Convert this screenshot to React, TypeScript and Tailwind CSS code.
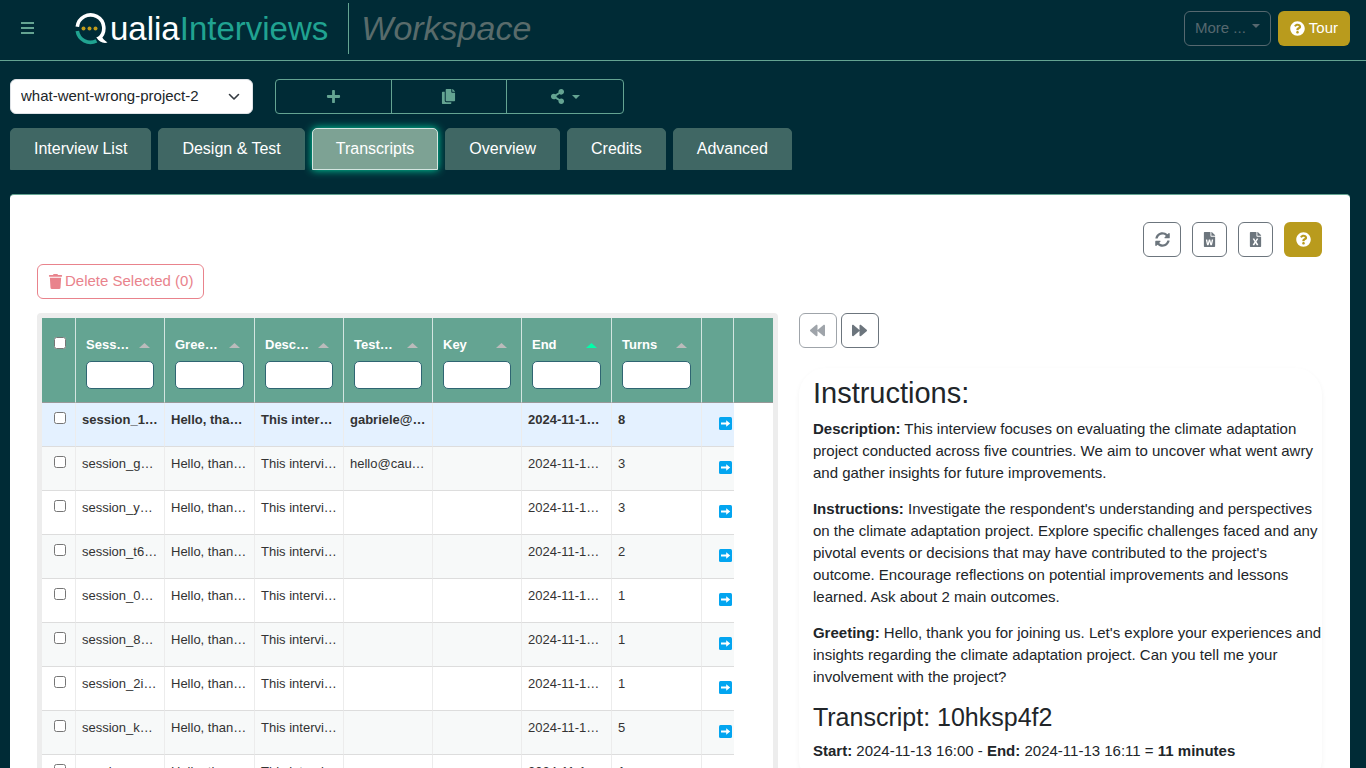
import { useState } from "react";
import {
  FaBackward,
  FaCopy,
  FaFileExcel,
  FaFileWord,
  FaForward,
  FaPlus,
  FaQuestionCircle,
  FaShareAlt,
  FaSyncAlt,
  FaTrash,
} from "react-icons/fa";

interface SessionRow {
  id: string;
  greeting: string;
  description: string;
  test: string;
  key: string;
  end: string;
  turns: number;
}

const TABS = ["Interview List", "Design & Test", "Transcripts", "Overview", "Credits", "Advanced"];

const COLUMNS = [
  { label: "Sess…", name: "Session", width: "w-[89px]" },
  { label: "Gree…", name: "Greeting", width: "w-[90px]" },
  { label: "Desc…", name: "Description", width: "w-[89px]" },
  { label: "Test…", name: "Tester", width: "w-[89px]" },
  { label: "Key", name: "Key", width: "w-[89px]" },
  { label: "End", name: "End", width: "w-[90px]" },
  { label: "Turns", name: "Turns", width: "w-[90px]" },
];

const makeRow = (id: string, turns: number, test = ""): SessionRow => ({
  id,
  greeting: "Hello, than…",
  description: "This intervi…",
  test,
  key: "",
  end: "2024-11-1…",
  turns,
});

const ROWS: SessionRow[] = [
  { ...makeRow("session_1…", 8, "gabriele@…"), greeting: "Hello, tha…", description: "This inter…" },
  makeRow("session_g…", 3, "hello@cau…"),
  makeRow("session_y…", 3),
  makeRow("session_t6…", 2),
  makeRow("session_0…", 1),
  makeRow("session_8…", 1),
  makeRow("session_2i…", 1),
  makeRow("session_k…", 5),
  makeRow("session_u…", 1),
];

function Logo() {
  return (
    <a href="#home" aria-label="Qualia Interviews" className="flex items-center text-[33px] leading-[38px]">
      <svg width="35" height="32" viewBox="0 0 35 32" fill="none" aria-hidden="true">
        <path d="M2.3 13.800A13.300 13.300 0 1 1 24.200 25.300" stroke="#fff" strokeWidth="3.6" />
        <path d="M21.300 24.200L26.300 22.800C27.500 25.500 29 27.200 32.500 29.600C28 30.600 24 29 21.300 24.200Z" fill="#fff" />
        <path d="M2.300 18A13.300 13.300 0 0 0 21.500 27.800" stroke="#20a391" strokeWidth="3.600" />
        <circle cx="8.500" cy="15.500" r="2" fill="#c09c1c" />
        <circle cx="14.500" cy="15.500" r="2" fill="#c09c1c" />
        <circle cx="20.500" cy="15.500" r="2" fill="#c09c1c" />
      </svg>
      <span className="text-white">ualia</span>
      <span className="text-[#20a391]">Interviews</span>
    </a>
  );
}

function Caret() {
  return (
    <svg width="8" height="4" viewBox="0 0 8 4" fill="currentColor" aria-hidden="true">
      <path d="M0 0h8L4 4z" />
    </svg>
  );
}

function Header() {
  return (
    <header className="flex h-[61px] items-center border-b border-[#64a492] pb-1 pl-[21px] pr-4">
      <button aria-label="Menu" className="text-[#64a492]">
        <svg className="block" width="14" height="12" viewBox="0 0 14 12" fill="currentColor" aria-hidden="true">
          <path d="M0 0h13v2H0zM0 5h13v2H0zM0 10h13v2H0z" />
        </svg>
      </button>
      <div className="ml-10 flex items-center self-start pt-[3px]">
        <Logo />
        <span className="ml-5 h-[51px] border-l border-[#64a492]" />
        <h1 className="ml-3 pb-[2px] text-[34px] italic leading-[38px] text-[#596b6b]">Workspace</h1>
      </div>
      <div className="ml-auto flex gap-[7px]">
        <button className="flex h-[35px] items-center gap-1.5 rounded-md border border-[#56686f] px-[10px] text-[15px] text-[#56686f]">
          More ...
          <span className="pb-1">
            <Caret />
          </span>
        </button>
        <button className="flex h-[35px] items-center gap-1 rounded-md bg-[#b99b1d] px-3 text-[15px] text-white">
          <FaQuestionCircle size={15} />
          Tour
        </button>
      </div>
    </header>
  );
}

function ProjectBar() {
  return (
    <div className="flex gap-[22px]">
      <div className="relative w-[243px]">
        <select
          aria-label="Project"
          className="h-[35px] w-full appearance-none rounded-md border border-[#dee2e6] bg-white px-[10px] text-[15px] text-[#212529]"
        >
          <option>what-went-wrong-project-2</option>
        </select>
        <svg
          className="pointer-events-none absolute right-3 top-3"
          width="14"
          height="12"
          viewBox="0 0 14 12"
          fill="none"
          stroke="#343a40"
          strokeWidth="1.6"
          strokeLinecap="round"
          strokeLinejoin="round"
          aria-hidden="true"
        >
          <path d="M2.500 3.500l4.500 4.500L11.500 3.500" />
        </svg>
      </div>
      <div className="grid h-[35px] w-[349px] grid-cols-3 divide-x divide-[#64a492] rounded border border-[#64a492] text-[#64a492]">
        <button aria-label="New project" className="flex items-center justify-center">
          <FaPlus size={15} />
        </button>
        <button aria-label="Copy project" className="flex items-center justify-center">
          <FaCopy size={15} />
        </button>
        <button aria-label="Share project" className="flex items-center justify-center gap-[7px]">
          <FaShareAlt size={15} />
          <Caret />
        </button>
      </div>
    </div>
  );
}

function SessionTable() {
  const [selected, setSelected] = useState<string[]>([]);
  const allSelected = selected.length === ROWS.length;

  const toggle = (id: string) =>
    setSelected((prev) => (prev.includes(id) ? prev.filter((s) => s !== id) : [...prev, id]));

  return (
    <div className="min-w-0 rounded border-[5px] border-[#ededed]">
      <table className="w-full table-fixed border-separate border-spacing-0 text-[13px] leading-[18px]">
        <thead className="bg-[#64a492] text-white">
          <tr className="align-top">
            <th className="w-[34px] border-b border-b-[#999] border-r border-r-[#d3e5e0] pl-[3px] pt-[19px]">
              <input
                type="checkbox"
                aria-label="Select all sessions"
                checked={allSelected}
                onChange={() => setSelected(allSelected ? [] : ROWS.map((r) => r.id))}
                className="mx-auto block size-3"
              />
            </th>
            {COLUMNS.map((col) => (
              <th
                key={col.name}
                className={`${col.width} border-b border-b-[#999] border-r border-r-[#d3e5e0] px-[10px] pb-[13px] pt-[18px] text-left font-bold`}
              >
                <div className="flex items-center justify-between pr-1">
                  {col.label}
                  <svg
                    width="11"
                    height="5"
                    viewBox="0 0 11 5"
                    fill={col.name === "End" ? "#00ffaa" : "#bbbbbb"}
                    aria-hidden="true"
                  >
                    <path d="M0 5h11L5.500 0z" />
                  </svg>
                </div>
                <input
                  type="text"
                  aria-label={`Filter ${col.name}`}
                  className="mt-[7px] block h-7 w-full rounded-[5px] border border-[#2f6572] bg-white px-1 font-normal text-[#333]"
                />
              </th>
            ))}
            <th className="w-8 border-b border-b-[#999] border-r border-r-[#d3e5e0]" />
            <th className="border-b border-b-[#999]" />
          </tr>
        </thead>
        <tbody className="text-[#333]">
          {ROWS.map((row, i) => (
            <tr
              key={row.id}
              className={`align-top ${i === 0 ? "bg-[#e4f1ff] font-bold" : i % 2 ? "bg-[#f7f9f9]" : "bg-white"}`}
            >
              <td className="h-11 border-b border-r border-b-[#dddddd] border-r-[#ececec] pl-[3px] pt-[9px]">
                <input
                  type="checkbox"
                  aria-label={`Select ${row.id}`}
                  checked={selected.includes(row.id)}
                  onChange={() => toggle(row.id)}
                  className="mx-auto block size-3"
                />
              </td>
              {[row.id, row.greeting, row.description, row.test, row.key, row.end, row.turns].map((value, j) => (
                <td
                  key={j}
                  className="truncate border-b border-r border-b-[#dddddd] border-r-[#ececec] px-[6px] pt-2"
                >
                  {value}
                </td>
              ))}
              <td className="border-b border-b-[#dddddd] pl-[17px] pt-[14px]">
                <button aria-label={`Open ${row.id}`} className="block">
                  <svg width="13" height="13" viewBox="0 0 13 13" aria-hidden="true">
                    <rect width="13" height="13" rx="1.500" fill="#03a5f0" />
                    <path d="M2 5.500h5.200V3.300l4 3.200-4 3.200V7.500H2z" fill="#fff" />
                  </svg>
                </button>
              </td>
              <td className="bg-white" />
            </tr>
          ))}
        </tbody>
      </table>
    </div>
  );
}

function TranscriptPane() {
  return (
    <div className="min-w-0">
      <div className="flex gap-1 text-[#6c757d]">
        <button
          disabled
          aria-label="Previous session"
          className="flex h-[35px] w-[38px] items-center justify-center rounded-md border border-[#6c757d] opacity-65"
        >
          <FaBackward size={15} />
        </button>
        <button
          aria-label="Next session"
          className="flex h-[35px] w-[38px] items-center justify-center rounded-md border border-[#6c757d]"
        >
          <FaForward size={15} />
        </button>
      </div>
      <article className="mt-5 rounded-[27px] pb-6 pl-[14px] pt-2 text-[15px] leading-[22px] text-[#212529] shadow-[0_2px_5px_rgba(0,0,0,0.05)]">
        <h2 className="mb-[7px] text-[29px] leading-[35px]">Instructions:</h2>
        <p className="mb-[14px]">
          <strong>Description:</strong> This interview focuses on evaluating the climate adaptation project conducted
          across five countries. We aim to uncover what went awry and gather insights for future improvements.
        </p>
        <p className="mb-[14px]">
          <strong>Instructions:</strong> Investigate the respondent's understanding and perspectives on the climate
          adaptation project. Explore specific challenges faced and any pivotal events or decisions that may have
          contributed to the project's outcome. Encourage reflections on potential improvements and lessons learned. Ask
          about 2 main outcomes.
        </p>
        <p className="mb-[14px]">
          <strong>Greeting:</strong> Hello, thank you for joining us. Let's explore your experiences and insights
          regarding the climate adaptation project. Can you tell me your involvement with the project?
        </p>
        <h3 className="mb-2 text-[25px] leading-[30px]">Transcript: 10hksp4f2</h3>
        <p>
          <strong>Start:</strong> 2024-11-13 16:00 - <strong>End:</strong> 2024-11-13 16:11 ={" "}
          <strong>11 minutes</strong>
        </p>
      </article>
    </div>
  );
}

export default function App() {
  const [activeTab, setActiveTab] = useState("Transcripts");

  return (
    <div className="min-h-screen bg-[#002b36] font-['Liberation_Sans',Arial,sans-serif]">
      <Header />
      <main className="pb-6 pl-[10px] pr-4 pt-[18px]">
        <ProjectBar />

        {/* Tabs */}
        <nav className="mt-[14px] flex gap-[7px]">
          {TABS.map((tab) => (
            <button
              key={tab}
              onClick={() => setActiveTab(tab)}
              className={`h-[42px] rounded-t-[5px] border px-[23px] text-base text-white ${
                tab === activeTab
                  ? "border-[#d3e5e0] bg-[#7da294] shadow-[0_0_9px_#00d9a3]"
                  : "border-[#406764] bg-[#406764]"
              }`}
            >
              {tab}
            </button>
          ))}
        </nav>

        <section className="mt-6 rounded border-t border-[#64a492] bg-white pb-7 pl-[27px] pr-7 pt-[27px]">
          {/* Export tools */}
          <div className="flex justify-end gap-[11px] text-[#6c757d]">
            <button
              aria-label="Refresh"
              className="flex h-[35px] w-[38px] items-center justify-center rounded-md border border-[#6c757d]"
            >
              <FaSyncAlt size={15} />
            </button>
            <button
              aria-label="Export to Word"
              className="flex h-[35px] w-[35px] items-center justify-center rounded-md border border-[#6c757d]"
            >
              <FaFileWord size={15} />
            </button>
            <button
              aria-label="Export to Excel"
              className="flex h-[35px] w-[35px] items-center justify-center rounded-md border border-[#6c757d]"
            >
              <FaFileExcel size={15} />
            </button>
            <button
              aria-label="Help"
              className="flex h-[35px] w-[38px] items-center justify-center rounded-md bg-[#b99b1d] text-white"
            >
              <FaQuestionCircle size={15} />
            </button>
          </div>

          <button className="mt-[7px] flex h-[35px] items-center gap-[2px] rounded-md border border-[#e9838c] px-[10px] text-[15px] text-[#e9838c]">
            <FaTrash size={15} />
            Delete Selected (0)
          </button>

          <div className="mt-[14px] grid grid-cols-[17fr_12fr] items-start gap-[21px]">
            <SessionTable />
            <TranscriptPane />
          </div>
        </section>
      </main>
    </div>
  );
}
